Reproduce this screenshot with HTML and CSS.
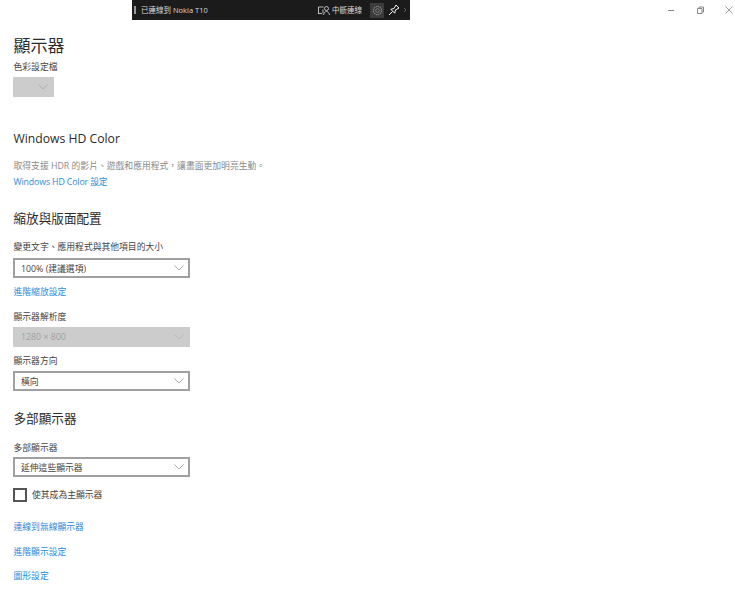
FILE: index.html
```html
<!DOCTYPE html>
<html lang="zh-Hant">
<head>
<meta charset="utf-8">
<title>顯示器</title>
<link rel="stylesheet" href="styles.css">
</head>
<body>
<div class="connect-bar">
  <span class="grip"></span>
  <span class="connect-name">已連線到 Nokia T10</span>
  <svg class="bar-icon cast" viewBox="0 0 13 11" width="13" height="11"><path d="M1.500 8V2h5M.8 8.500h4.500M6 4.500V8" fill="none" stroke="#e0e0e0" stroke-width=".8"/><circle cx="9.500" cy="3.500" r="2" fill="none" stroke="#e0e0e0" stroke-width=".8"/><path d="M6.500 10c.3-2 1.500-3.500 3-3.500s2.700 1.500 3 3.500" fill="none" stroke="#e0e0e0" stroke-width=".8"/></svg>
  <span class="disconnect">中斷連線</span>
  <span class="gear-box"><svg viewBox="0 0 12 12" width="11" height="11"><circle cx="6" cy="6" r="2" fill="none" stroke="#8c8c8c" stroke-width=".8"/><circle cx="6" cy="6" r="4.500" fill="none" stroke="#8c8c8c" stroke-width="1.200" stroke-dasharray="1.500 .8"/></svg></span>
  <svg class="bar-icon pin" viewBox="0 0 12 12" width="12" height="12"><path d="M1 11l3.500-3.500M2.800 5.300l3.900 3.900.8-3.200L11 4 8 1 6 4.500z" fill="none" stroke="#f4f4f4" stroke-width="1"/></svg>
  <svg class="chev" viewBox="0 0 4 6" width="4" height="6"><path d="M1 1l2 2-2 2" fill="none" stroke="#777" stroke-width=".7"/></svg>
</div>
<div class="window-controls">
  <svg viewBox="0 0 10 10" width="10" height="10"><path d="M2 5.500h6" stroke="#888" stroke-width="1"/></svg>
  <svg viewBox="0 0 10 10" width="10" height="10"><path d="M2.500 3.500h4.500v5h-4.500zM4 3.500V2h4.500v5H7" fill="none" stroke="#888" stroke-width="1"/></svg>
  <svg viewBox="0 0 10 10" width="10" height="10"><path d="M1.500 1.500l7 7M8.500 1.500l-7 7" stroke="#888" stroke-width=".8"/></svg>
</div>
<main class="page">
  <h1 class="title">顯示器</h1>
  <div class="label first-label">色彩設定檔</div>
  <div class="select disabled small tight"><svg class="arrow" viewBox="0 0 10 6" width="10" height="6"><path d="M.5.500l4.500 4.500 4.500-4.500" fill="none" stroke="#a0a0a0" stroke-width=".7"/></svg></div>

  <h2 class="heading hd-heading">Windows HD Color</h2>
  <p class="desc">取得支援 HDR 的影片、遊戲和應用程式，讓畫面更加明亮生動。</p>
  <a class="link hd-link">Windows HD Color 設定</a>

  <h2 class="heading scale-heading">縮放與版面配置</h2>
  <div class="label scale-label">變更文字、應用程式與其他項目的大小</div>
  <div class="select"><span>100% (建議選項)</span><svg class="arrow" viewBox="0 0 10 6" width="10" height="6"><path d="M.5.500l4.500 4.500 4.500-4.500" fill="none" stroke="#8a8a8a" stroke-width=".7"/></svg></div>
  <a class="link adv-scale">進階縮放設定</a>
  <div class="label res-label">顯示器解析度</div>
  <div class="select disabled tight"><span>1280 × 800</span><svg class="arrow" viewBox="0 0 10 6" width="10" height="6"><path d="M.5.500l4.500 4.500 4.500-4.500" fill="none" stroke="#b0b0b0" stroke-width=".7"/></svg></div>
  <div class="label orient-label">顯示器方向</div>
  <div class="select tight"><span>橫向</span><svg class="arrow" viewBox="0 0 10 6" width="10" height="6"><path d="M.5.500l4.500 4.500 4.500-4.500" fill="none" stroke="#8a8a8a" stroke-width=".7"/></svg></div>

  <h2 class="heading multi-heading">多部顯示器</h2>
  <div class="label multi-label">多部顯示器</div>
  <div class="select tighter"><span>延伸這些顯示器</span><svg class="arrow" viewBox="0 0 10 6" width="10" height="6"><path d="M.5.500l4.500 4.500 4.500-4.500" fill="none" stroke="#8a8a8a" stroke-width=".7"/></svg></div>
  <div class="check-row"><span class="checkbox"></span><span>使其成為主顯示器</span></div>
  <a class="link wireless">連線到無線顯示器</a>
  <a class="link adv-display">進階顯示設定</a>
  <a class="link graphics">圖形設定</a>
</main>
</body>
</html>
```
FILE: styles.css
```css
* { box-sizing: border-box; }
html, body { margin: 0; padding: 0; }
body {
  width: 735px;
  height: 595px;
  overflow: hidden;
  position: relative;
  background: #fff;
  color: #2b2b2b;
  font-family: "Open Sans", "Noto Sans CJK TC", sans-serif;
  font-weight: 400;
}
.connect-bar {
  position: absolute;
  left: 132px;
  top: 0;
  width: 278px;
  height: 20px;
  background: #1b1b1b;
  color: #d8d8d8;
  display: flex;
  align-items: center;
  font-size: 7.500px;
  line-height: 12px;
}
.grip { width: 2px; height: 8px; background: #999; margin-left: 2px; }
.connect-name { margin-left: 5px; flex: 1; }
.cast { margin-right: 2px; }
.disconnect { width: 31px; white-space: nowrap; font-size: 7.500px; }
.gear-box {
  width: 14px;
  height: 15px;
  margin-left: 7px;
  background: #3b3b3b;
  display: flex;
  align-items: center;
  justify-content: center;
}
.pin { margin-left: 4px; }
.chev { margin-left: 3px; margin-right: 3px; }
.window-controls {
  position: absolute;
  right: 0;
  top: 5px;
  width: 69px;
  padding-right: 1px;
  display: flex;
  justify-content: space-between;
}
.page { padding-left: 13.500px; display: flex; flex-direction: column; align-items: flex-start; }
.title { margin: 34px 0 0; font-size: 17px; line-height: 23px; font-weight: 400; }
.heading { margin: 0; font-weight: 400; font-size: 12.600px; line-height: 18px; }
.label { font-size: 8.800px; line-height: 12px; color: #444; }
.first-label { margin-top: 4px; }
.select {
  width: 177px;
  height: 20px;
  border: 2px solid #a0a0a0;
  background: #fff;
  display: flex;
  align-items: center;
  justify-content: space-between;
  padding: 0 3px 0 6px;
  margin-left: -.5px;
  font-size: 8.800px;
  color: #444;
  margin-top: 5px;
}
.select .arrow { margin-right: 1px; }
.select.tight { margin-top: 4px; }
.select.tighter { margin-top: 3px; }
.select.disabled { background: #ccc; border-color: #ccc; color: #a0a0a0; }
.select.small { width: 41px; justify-content: flex-end; padding-right: 3px; }
.hd-heading { margin-top: 33px; font-size: 12.200px; }
.desc { margin: 12px 0 0; font-size: 8.800px; line-height: 12px; color: #8a8a8a; white-space: nowrap; }
.link { color: #2a8bdc; font-size: 8.800px; line-height: 12px; display: block; white-space: nowrap; }
.hd-link { margin-top: 4px; letter-spacing: -.14px; }
.scale-heading { margin-top: 22px; }
.scale-label { margin-top: 13px; }
.adv-scale { margin-top: 8px; }
.res-label { margin-top: 13px; }
.orient-label { margin-top: 8px; }
.multi-heading { margin-top: 19px; }
.multi-label { margin-top: 14px; }
.check-row { display: flex; align-items: center; gap: 5px; font-size: 8.800px; line-height: 12px; margin-top: 11px; color: #444; }
.checkbox { width: 14px; height: 14px; border: 2px solid #555; margin-left: -.5px; }
.wireless { margin-top: 19px; }
.adv-display { margin-top: 13px; }
.graphics { margin-top: 12px; }
```
